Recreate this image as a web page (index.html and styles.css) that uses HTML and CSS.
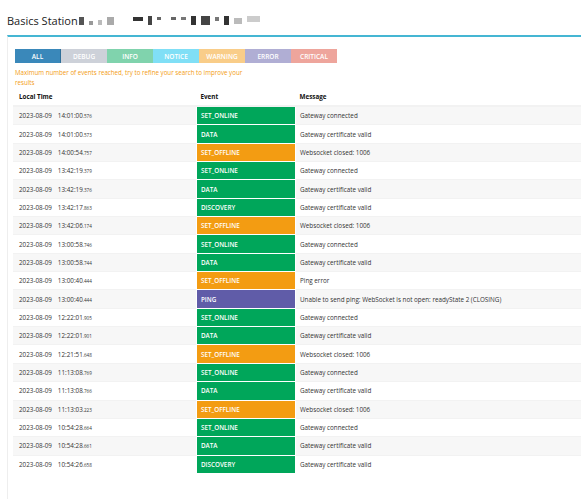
FILE: index.html
```html
<!DOCTYPE html>
<html lang="en">
<head>
    <meta charset="UTF-8">
    <meta name="viewport" content="width=device-width, initial-scale=1.0">
    <title>Basics Station</title>
    <link rel="stylesheet" href="styles.css">
</head>
<body>
    <div class="page-header">
        <h1>Basics Station
            <span class="redacted">
                <i class="px d1"></i><i class="px l1"></i><i class="px s1"></i><i class="px l2"></i>
                <i class="gap"></i>
                <i class="px d2"></i><i class="px d3"></i><i class="px s2"></i><i class="px s3"></i><i class="px s4"></i>
                <i class="px d4"></i><i class="px d5"></i><i class="px s5"></i><i class="px d6"></i><i class="px l3"></i><i class="px l4"></i>
            </span>
        </h1>
    </div>

    <div class="box">
        <div class="filters">
            <button class="filter all active">ALL</button>
            <button class="filter debug">DEBUG</button>
            <button class="filter info">INFO</button>
            <button class="filter notice">NOTICE</button>
            <button class="filter warning">WARNING</button>
            <button class="filter error">ERROR</button>
            <button class="filter critical">CRITICAL</button>
        </div>
        <p class="limite">Maximum number of events reached, try to refine your search to improve your<br>results</p>

        <table class="eventos">
            <thead>
                <tr>
                    <th class="col-time">Local Time</th>
                    <th class="col-event">Event</th>
                    <th>Message</th>
                </tr>
            </thead>
            <tbody id="lista-eventos"></tbody>
        </table>
    </div>

    <script>
        const eventos = [
            ['14:01:00', '576', 'SET_ONLINE', 'Gateway connected'],
            ['14:01:00', '573', 'DATA', 'Gateway certificate valid'],
            ['14:00:54', '757', 'SET_OFFLINE', 'Websocket closed: 1006'],
            ['13:42:19', '379', 'SET_ONLINE', 'Gateway connected'],
            ['13:42:19', '376', 'DATA', 'Gateway certificate valid'],
            ['13:42:17', '863', 'DISCOVERY', 'Gateway certificate valid'],
            ['13:42:06', '174', 'SET_OFFLINE', 'Websocket closed: 1006'],
            ['13:00:58', '746', 'SET_ONLINE', 'Gateway connected'],
            ['13:00:58', '744', 'DATA', 'Gateway certificate valid'],
            ['13:00:40', '444', 'SET_OFFLINE', 'Ping error'],
            ['13:00:40', '444', 'PING', 'Unable to send ping: WebSocket is not open: readyState 2 (CLOSING)'],
            ['12:22:01', '905', 'SET_ONLINE', 'Gateway connected'],
            ['12:22:01', '901', 'DATA', 'Gateway certificate valid'],
            ['12:21:51', '648', 'SET_OFFLINE', 'Websocket closed: 1006'],
            ['11:13:08', '769', 'SET_ONLINE', 'Gateway connected'],
            ['11:13:08', '766', 'DATA', 'Gateway certificate valid'],
            ['11:13:03', '223', 'SET_OFFLINE', 'Websocket closed: 1006'],
            ['10:54:28', '664', 'SET_ONLINE', 'Gateway connected'],
            ['10:54:28', '661', 'DATA', 'Gateway certificate valid'],
            ['10:54:26', '658', 'DISCOVERY', 'Gateway certificate valid']
        ];

        const cores = {
            SET_OFFLINE: 'ev-warning',
            PING: 'ev-debug'
        };

        const lista = document.getElementById('lista-eventos');
        eventos.forEach(ev => {
            let tr = document.createElement('tr');
            tr.innerHTML =
                '<td class="col-time"><span class="data">2023-08-09</span>' + ev[0] + '<small>.' + ev[1] + '</small></td>' +
                '<td class="col-event ' + (cores[ev[2]] || 'ev-info') + '">' + ev[2] + '</td>' +
                '<td>' + ev[3] + '</td>';
            lista.appendChild(tr);
        });
    </script>
</body>
</html>
```

FILE: styles.css
```css
body {
    margin: 0;
    font-family: "Open Sans", "Noto Sans", sans-serif;
    color: #333;
    background: #fff;
}
.page-header {
    padding: 13px 7px 0;
    height: 22px;
}
h1 {
    margin: 0;
    font-size: 11px;
    font-weight: 400;
    color: #222;
    display: flex;
    align-items: center;
}
.redacted {
    display: inline-flex;
    align-items: center;
    margin-left: 1px;
    height: 12px;
}
.redacted i {
    display: inline-block;
}
.px {
    height: 6px;
    margin-right: 5px;
}
.gap {
    width: 14px;
}
.d1 { width: 5px; height: 8px; background: #555; }
.l1 { width: 4px; height: 4px; background: #999; margin-top: 4px; }
.s1 { width: 4px; height: 5px; background: #bbb; margin-top: 3px; }
.l2 { width: 7px; height: 8px; background: #aaa; }
.d2 { width: 10px; height: 4px; background: #333; margin-top: -3px; }
.d3 { width: 4px; height: 9px; background: #444; }
.s2 { width: 4px; height: 3px; background: #666; margin-top: -4px; }
.s3 { width: 5px; height: 3px; background: #666; margin-top: -4px; margin-left: 5px; }
.s4 { width: 5px; height: 3px; background: #777; margin-top: -4px; }
.d4 { width: 5px; height: 9px; background: #333; }
.d5 { width: 9px; height: 9px; background: #444; }
.s5 { width: 4px; height: 4px; background: #777; margin-top: -4px; }
.d6 { width: 5px; height: 9px; background: #333; }
.l3 { width: 8px; height: 6px; background: #bbb; }
.l4 { width: 13px; height: 6px; background: #ccc; margin-top: -4px; }

.box {
    margin-left: 7px;
    border-top: 2px solid #45b6d3;
    border-left: 1px solid #eee;
    padding: 12px 0 20px 7px;
    height: 430px;
}
.filters {
    display: flex;
}
.filter {
    width: 46px;
    height: 14px;
    border: none;
    padding: 0;
    margin: 0;
    font-family: inherit;
    font-size: 6.5px;
    font-weight: 600;
    color: #fff;
    cursor: pointer;
}
.filter.active {
    border-right: 1px solid #2f6f99;
}
.all { background: #3a88ba; }
.debug { background: #cdd1d9; }
.info { background: #80d3ad; }
.notice { background: #80dff6; }
.warning { background: #f9cd89; }
.error { background: #b0aed4; }
.critical { background: #eea59c; }

.limite {
    margin: 5px 0 0;
    font-size: 6.2px;
    line-height: 10px;
    white-space: nowrap;
    color: #f39c12;
}

.eventos {
    margin-left: -2px;
    width: calc(100% + 2px);
    border-collapse: collapse;
    font-size: 6.3px;
    color: #333;
}
.eventos th {
    text-align: left;
    font-weight: 700;
    color: #111;
    height: 17px;
    padding: 0 4px;
    border-bottom: 2px solid #f2f2f2;
}
.eventos th.col-time {
    padding-left: 6px;
}
.eventos td {
    height: 17.35px;
    padding: 0 4px;
    border-top: 1px solid #f2f2f2;
    white-space: nowrap;
}
.eventos tbody tr:nth-child(odd) {
    background: #f7f7f7;
}
.eventos td.col-time {
    width: 173px;
    padding-left: 6px;
}
.col-event {
    width: 90px;
}
.data {
    margin-right: 6px;
}
small {
    font-size: 4.6px;
}
.eventos td.col-event {
    color: #fff;
    font-weight: 600;
    border-top: 1px solid #fff;
    border-left: 1px solid #fff;
    border-right: 1px solid #fff;
}
.ev-info { background: #00a65a; }
.ev-warning { background: #f39c12; }
.ev-debug { background: #605ca8; }
```
